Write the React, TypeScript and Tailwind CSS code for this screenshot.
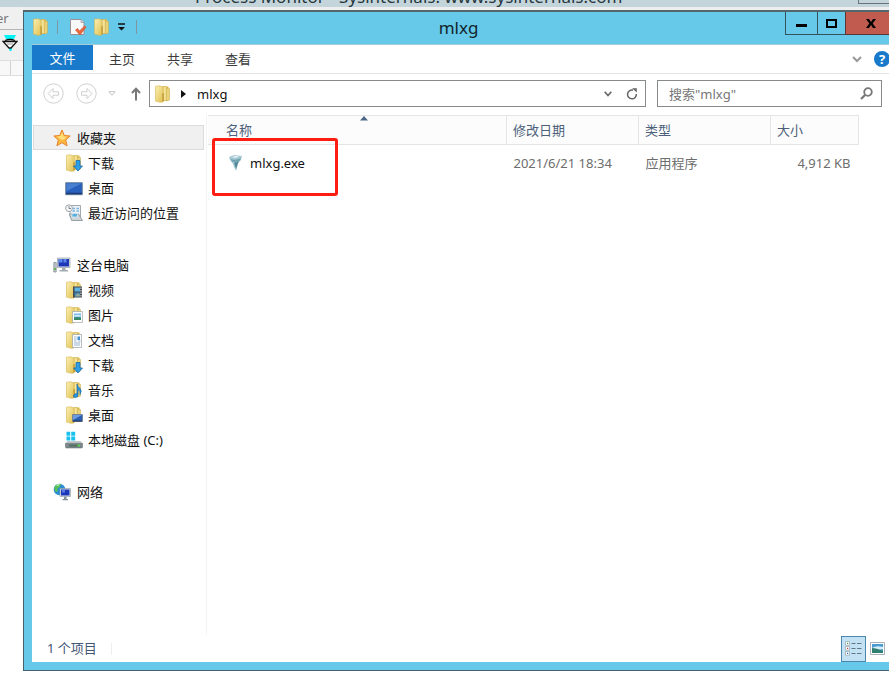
import React from "react";

type IconProps = { className?: string };

const Folder = ({ children, className = "size-[18px]" }: IconProps & { children?: React.ReactNode }) => (
  <svg viewBox="0 0 18 18" className={`shrink-0 ${className}`} aria-hidden="true">
    <defs>
      <linearGradient id="folderFront" x1="0" y1="0" x2="1" y2="1">
        <stop offset="0" stopColor="#fbf0b4" />
        <stop offset="1" stopColor="#e0c04e" />
      </linearGradient>
    </defs>
    <path d="M7 1.500h7.500v14H7z" fill="#dcba4c" />
    <path d="M12 3l3.500.5V15l-3.500 1z" fill="#e9d27a" stroke="#c9a941" strokeWidth=".5" />
    <path d="M9 1.500h3.300v14H9z" fill="#f3e297" stroke="#caa843" strokeWidth=".5" />
    <path d="M1.500 1.200L6 .8l3 1.700v14.500l-3 .3-4.500-1.200z" fill="url(#folderFront)" stroke="#d6b753" strokeWidth=".6" />
    <path d="M8.500 8l1.200.5v7.500l-1.200 1z" fill="#b98e2e" />
    {children}
  </svg>
);

const DownloadFolder = () => (
  <Folder>
    <path d="M11 6.500h4V12h2.500L13 17 8.500 12H11z" fill="#2f9fe3" stroke="#1769ac" strokeWidth=".8" />
  </Folder>
);

const VideoFolder = () => (
  <Folder>
    <path d="M8 5.500h9v11H8z" fill="#414b50" />
    <path d="M9.500 6.500h5.500v4H9.500z" fill="#5db0df" />
    <path d="M9.500 11.500h5.500v4H9.500z" fill="#3f83b5" />
    <path d="M10 15l3-3 2 2v1.500h-5z" fill="#93aa9a" />
    <path d="M16 6.500v9.500" stroke="#e9eff2" strokeDasharray="1.500 1" />
  </Folder>
);

const PictureFolder = () => (
  <Folder>
    <path d="M7.500 5.500h10v11h-10z" fill="#fff" stroke="#9ca5aa" strokeWidth=".7" />
    <path d="M9 7.500h7v6.500H9z" fill="#6fb9ea" />
    <path d="M9 11.500q3-1 7 0V14H9z" fill="#37896b" />
    <path d="M9 9.500q3-1.500 7 0v1H9z" fill="#d9eefb" />
  </Folder>
);

const DocFolder = () => (
  <Folder>
    <path d="M7.500 3.500h9v13h-9z" fill="#fbfcfd" stroke="#98a2aa" strokeWidth=".7" />
    <path d="M9 6h2.500M9 8h2.500M9 10h2.500M9 12h6M9 14h6M13 10h2.500" stroke="#8facc6" strokeWidth=".9" />
    <path d="M12.500 5.500h2.500v3.500h-2.500z" fill="#3c8fd2" />
  </Folder>
);

const MusicFolder = () => (
  <Folder>
    <path d="M12 3q.5 2.500 3 4.500t0 6q1-3-2-5v5.500q0 2.500-2.500 2.500T8.500 14.500t3.500-2z" fill="#2a93db" stroke="#1667a8" strokeWidth=".6" />
  </Folder>
);

const DesktopFolder = () => (
  <Folder>
    <path d="M7.500 8.500h10v7h-10z" fill="#2a5eb4" stroke="#6d7b8c" strokeWidth=".7" />
    <path d="M8 9h9l-9 5z" fill="#6b9ce0" />
    <path d="M8 15h9" stroke="#23334f" />
  </Folder>
);

const Star = () => (
  <svg viewBox="0 0 18 18" className="size-[18px] shrink-0" aria-hidden="true">
    <path d="M9 1l2.300 5.500 5.900.5-4.500 3.900 1.400 5.900L9 13.700 3.900 16.800l1.400-5.900L.8 7l5.900-.5z" fill="#fcb940" stroke="#e8832c" strokeWidth="1" strokeLinejoin="round" />
    <path d="M9 3.500l1.500 4 3.500.3-3 2.500L9 11 6 9l-2.500-1.200L7.500 7z" fill="#ffe07c" />
  </svg>
);

const Desktop = () => (
  <svg viewBox="0 0 18 18" className="size-[18px] shrink-0" aria-hidden="true">
    <path d="M.7 3.700h16.600v12H.7z" fill="#2860bd" stroke="#71859f" />
    <path d="M1.500 4.500h15L1.500 12z" fill="#4a80d2" />
    <path d="M1 14.500h16" stroke="#1c3a74" strokeWidth="1.500" />
  </svg>
);

const Recent = () => (
  <svg viewBox="0 0 18 18" className="size-[18px] shrink-0" aria-hidden="true">
    <path d="M5 1.500h10.500v11H5z" fill="#e9f1f6" stroke="#8d979e" strokeWidth=".8" />
    <path d="M7.500 4.500H10M11.500 4.500h2.500M7.500 7H10M11.500 7h2.500" stroke="#7cb3dc" strokeWidth="1.300" />
    <path d="M4.500 10h9l4 6.500h-11z" fill="#cdd5d9" stroke="#848d92" strokeWidth=".8" />
    <path d="M7 9.500h5.500v3.500H7z" fill="#57aee0" stroke="#dfe9ee" strokeWidth=".8" />
    <circle cx="4" cy="4.200" r="3.400" fill="#f5f7f8" stroke="#949da3" strokeWidth=".9" />
    <path d="M4 2v2.500h2" fill="none" stroke="#5e686e" strokeWidth=".8" />
  </svg>
);

const Computer = () => (
  <svg viewBox="0 0 18 18" className="size-[18px] shrink-0" aria-hidden="true">
    <path d="M.8 6.500h2.400v9.500H.8z" fill="#c4cbd0" stroke="#788288" strokeWidth=".7" />
    <path d="M1.200 12h1.600v2H1.200z" fill="#54b33c" />
    <path d="M4.500 2h12.500v9.500H4.500z" fill="#e1e5e8" stroke="#929ba2" strokeWidth=".7" />
    <path d="M5.500 3h10.500v7.500H5.500z" fill="#1c36b5" />
    <path d="M5.500 3h4v3.500h-4zM10.500 3h3v3.500h-3z" fill="#5c86e8" />
    <path d="M9 12h3.500v2H15v1.500H6.500V14H9z" fill="#a4abb0" />
  </svg>
);

const Drive = () => (
  <svg viewBox="0 0 18 18" className="size-[18px] shrink-0" aria-hidden="true">
    <path d="M1.500.8h3.700v4H1.500zM6.200.8h4v4h-4zM1.500 5.600h3.700v4H1.500zM6.200 5.600h4v4h-4z" fill="#19c1ee" />
    <path d="M2.500 10h13l2 2.500H.5z" fill="#c3cacd" />
    <path d="M.5 12.300h17v3.700q0 1-1 1h-15q-1 0-1-1z" fill="#7c878b" stroke="#5c6669" strokeWidth=".5" />
    <path d="M4 13.700h10v1.800H4z" fill="#4f6f5b" />
    <path d="M12.500 13.700h2.500v1.800h-2.500z" fill="#56d64a" />
  </svg>
);

const Network = () => (
  <svg viewBox="0 0 18 18" className="size-[18px] shrink-0" aria-hidden="true">
    <circle cx="6.500" cy="6.500" r="5.800" fill="#2a8dd5" />
    <path d="M2 3q3-3 6-2L7 4 4.500 5.500 5 8l-2 1Q.5 7 2 3zM7 7l4-1v5l-3 1z" fill="#58bf55" />
    <path d="M3 2q2-1 4-.7L5 3z" fill="#d5f2e0" />
    <path d="M7 5.500h10.500v8H7z" fill="#dfe4e9" stroke="#8a949e" strokeWidth=".6" />
    <path d="M8 6.500h8.500v6H8z" fill="#1b36b9" />
    <path d="M9 6.500h3v3H9z" fill="#587ee2" />
    <path d="M11 13.800h2.500V16H15v1.200H9.500V16H11z" fill="#848e96" />
  </svg>
);

const CheckedPage = () => (
  <svg viewBox="0 0 18 18" className="size-[18px] shrink-0" aria-hidden="true">
    <path d="M1.500 1.500H12l3 3v12H1.500z" fill="#f7f8fa" stroke="#9c8f95" />
    <path d="M12 1.500v3h3" fill="#d9dde1" stroke="#9c8f95" strokeWidth=".7" />
    <path d="M6.500 12l2-1.500 2 2.500L15.500 8l1.500 1-6 8z" fill="#e9683d" stroke="#d4532c" strokeWidth=".7" />
  </svg>
);

const ExeIcon = () => (
  <svg viewBox="0 0 16 18" className="h-[18px] w-4 shrink-0" aria-hidden="true">
    <path d="M1 3l5-2 8 1-1 4-3 3-.5 3L8 17l-2-4-1-3-3-4z" fill="#a7c9d3" />
    <path d="M2.500 5q5 2 10.500-1l-1 2.500q-4 2.500-8 1z" fill="#6ea3b2" />
    <path d="M6 8.500q3 0 5-1.500L9.500 10.500l-1 3L8 15z" fill="#4f8798" />
    <path d="M4 3q4-1.500 7-.5Q8 4.500 4 3z" fill="#edf7fa" />
  </svg>
);

const sidebar: { head: string; icon: React.ReactNode; active?: boolean; items: [string, React.ReactNode][] }[] = [
  {
    head: "收藏夹",
    icon: <Star />,
    active: true,
    items: [
      ["下载", <DownloadFolder />],
      ["桌面", <Desktop />],
      ["最近访问的位置", <Recent />],
    ],
  },
  {
    head: "这台电脑",
    icon: <Computer />,
    items: [
      ["视频", <VideoFolder />],
      ["图片", <PictureFolder />],
      ["文档", <DocFolder />],
      ["下载", <DownloadFolder />],
      ["音乐", <MusicFolder />],
      ["桌面", <DesktopFolder />],
      ["本地磁盘 (C:)", <Drive />],
    ],
  },
  { head: "网络", icon: <Network />, items: [] },
];

function TitleBar() {
  return (
    <header className="flex h-8 shrink-0 items-start bg-[#66c9e9]">
      <div className="flex h-[30px] flex-1 items-center pl-2">
        <Folder />
        <span className="ml-[7px] h-3.5 w-px bg-[#7d98a2]" />
        <button aria-label="属性" className="ml-[11px]"><CheckedPage /></button>
        <button aria-label="新建文件夹" className="ml-1.5"><Folder /></button>
        <button aria-label="自定义快速访问工具栏" className="ml-1.5">
          <svg viewBox="0 0 9 8" className="h-2 w-[9px]"><path d="M1 1h7" stroke="#111" strokeWidth="1.500" /><path d="M1 4h7L4.500 7.500z" fill="#111" /></svg>
        </button>
        <span className="ml-2.5 h-3.5 w-px bg-[#7d98a2]" />
      </div>
      <h1 className="h-8 pr-1 text-[17px] leading-8 text-[#12242b]">mlxg</h1>
      <div className="flex flex-1 justify-end">
        <button aria-label="最小化" className="flex h-[23px] w-8 items-center justify-center border-b border-l border-[#35525d]">
          <span className="mt-1 h-[3px] w-[11px] bg-black" />
        </button>
        <button aria-label="最大化" className="flex h-[23px] w-7 items-center justify-center border-b border-l border-[#35525d]">
          <span className="h-[9px] w-[11px] border-2 border-black" />
        </button>
        <button aria-label="关闭" className="flex h-[23px] w-11 items-center justify-center border-b border-l border-[#5f3532] bg-[#c15a4f] pl-1.5">
          <svg viewBox="0 0 10 9" className="h-[9px] w-2.5"><path d="M0 0h3l2 3 2-3h3L6.700 4.500 10 9H7L5 6 3 9H0l3.300-4.500z" fill="#000" /></svg>
        </button>
      </div>
    </header>
  );
}

function Ribbon() {
  return (
    <nav className="flex h-[30px] shrink-0 items-start border-b border-[#e2e3e4] border-t border-t-[#a9cbd8]">
      <button className="h-[25px] w-[61px] bg-[#1979ca] text-white">文件</button>
      {["主页", "共享", "查看"].map((t) => (
        <button key={t} className="h-7 px-4 text-[#3c3c3c]">{t}</button>
      ))}
      <div className="ml-auto flex h-7 items-center">
        <button aria-label="展开功能区" className="mr-3">
          <svg viewBox="0 0 10 7" className="h-[7px] w-2.5"><path d="M1 1l4 4 4-4" fill="none" stroke="#999" strokeWidth="2" /></svg>
        </button>
        <button aria-label="帮助" className="-mr-px flex size-4 items-center justify-center rounded-full bg-[#1979ca] text-[13px] font-bold text-white">?</button>
      </div>
    </nav>
  );
}

function AddressRow() {
  return (
    <div className="flex h-[39px] shrink-0 items-center pr-[7px] pl-[11px]">
      <button aria-label="后退" className="mr-3">
        <svg viewBox="0 0 21 21" className="size-[21px]" fill="none" stroke="#cfcfcf"><circle cx="10.500" cy="10.500" r="9.700" /><path d="M5 10.500l5-5v3.300h5.500v3.400H10v3.300z" /></svg>
      </button>
      <button aria-label="前进" className="mr-[11px]">
        <svg viewBox="0 0 21 21" className="size-[21px]" fill="none" stroke="#cfcfcf"><circle cx="10.500" cy="10.500" r="9.700" /><path d="M16 10.500l-5-5v3.300H5.500v3.400H11v3.300z" /></svg>
      </button>
      <button aria-label="最近浏览的位置" className="mr-[15px]">
        <svg viewBox="0 0 8 5" className="h-[5px] w-2"><path d="M1 .7h6L4 4.300z" fill="none" stroke="#c4c4c4" /></svg>
      </button>
      <button aria-label="向上" className="mr-2">
        <svg viewBox="0 0 10 14" className="h-3.5 w-2.5" fill="none" stroke="#777" strokeWidth="2"><path d="M5 13.500V2M1 6l4-4.300L9 6" /></svg>
      </button>
      <div className="flex h-[27px] flex-1 items-center border border-[#868a8a] pl-1 text-[#111]">
        <Folder />
        <svg viewBox="0 0 5 8" className="mr-[11px] ml-[9px] h-2 w-[5px]"><path d="M0 0l5 4-5 4z" fill="#111" /></svg>
        <span>mlxg</span>
        <button aria-label="以前的位置" className="mr-3.5 ml-auto">
          <svg viewBox="0 0 8 6" className="h-1.5 w-2"><path d="M.7.7L4 4.500 7.300.7" fill="none" stroke="#666" strokeWidth="1.600" /></svg>
        </button>
        <button aria-label="刷新" className="mr-[7px]">
          <svg viewBox="0 0 12 12" className="size-3" fill="none" stroke="#666" strokeWidth="1.500"><path d="M7 2.200A4.400 4.400 0 1 0 10.300 6" /><path d="M6 .2h4.800v4.300z" fill="#666" stroke="none" /></svg>
        </button>
      </div>
      <div className="ml-[11px] flex h-[27px] w-[225px] items-center border border-[#868a8a] pr-2 pl-[11px]">
        <input aria-label='搜索"mlxg"' placeholder='搜索"mlxg"' className="min-w-0 flex-1 bg-transparent text-[#222] outline-none placeholder:text-[#777]" />
        <svg viewBox="0 0 13 13" className="size-[13px]" fill="none" stroke="#777" strokeWidth="1.800"><circle cx="8" cy="5" r="3.800" /><path d="M5.300 7.700L1 12" strokeWidth="2.200" /></svg>
      </div>
    </div>
  );
}

function Sidebar() {
  return (
    <aside className="flex w-[175px] shrink-0 flex-col gap-[27px] border-r border-[#f3f3f3] pt-3 pr-[2px] pl-px text-[#111]">
      {sidebar.map((g) => (
        <section key={g.head}>
          <a href="#" className={g.active ? "flex h-[25px] items-center gap-1.5 border border-[#dcdcdc] bg-[#f0f0f0] pl-[19px]" : "flex h-[25px] items-center gap-1.5 pl-5"}>
            {g.icon}
            <span>{g.head}</span>
          </a>
          {g.items.map(([t, icon]) => (
            <a key={t} href="#" className="flex h-[25px] items-center gap-[5px] pl-8">
              {icon}
              <span>{t}</span>
            </a>
          ))}
        </section>
      ))}
    </aside>
  );
}

function FileList() {
  const th = "h-[29px] border border-[#e3e5e7] bg-[#fcfcfc] p-0 pl-1.5 text-left font-normal text-[#4c607a]";
  return (
    <main className="relative min-w-0 flex-1 pt-[2px] pr-[30px] pl-px">
      <table className="w-full table-fixed border-collapse">
        <colgroup>
          <col />
          <col className="w-[132px]" />
          <col className="w-[132px]" />
          <col className="w-[88px]" />
        </colgroup>
        <thead>
          <tr>
            <th className="relative h-[29px] border border-l-0 border-[#e3e5e7] bg-[#fcfcfc] p-0 pl-[18px] text-left font-normal text-[#4c607a]">
              名称
              <svg viewBox="0 0 8 5" className="absolute top-0 left-[51%] h-[5px] w-2"><path d="M4 0l4 4.500H0z" fill="#4c6686" /></svg>
            </th>
            <th className={th}>修改日期</th>
            <th className={th}>类型</th>
            <th className={th}>大小</th>
          </tr>
        </thead>
        <tbody>
          <tr className="h-9 text-[#6d6d6d]">
            <td className="p-0 pl-5 text-[#111]">
              <div className="flex items-center gap-1.5">
                <ExeIcon />
                mlxg.exe
              </div>
            </td>
            <td className="p-0 pl-[7px]">2021/6/21 18:34</td>
            <td className="p-0 pl-[7px]">应用程序</td>
            <td className="p-0 pr-2 text-right">4,912 KB</td>
          </tr>
        </tbody>
      </table>
      <div className="pointer-events-none absolute top-[25px] left-[5px] h-[58px] w-[126px] rounded-[3px] border-[3px] border-[#ff1d12]" />
    </main>
  );
}

function StatusBar() {
  return (
    <footer className="flex h-[27px] shrink-0 items-center pl-[15px] text-[#3f5573]">
      <span className="pb-px">1 个项目</span>
      <span className="ml-3.5 h-3 w-px bg-[#eeeeee]" />
      <div className="ml-auto flex items-center">
        <button aria-label="详细信息" className="flex h-[26px] w-[25px] items-center justify-center border border-[#4b86ae] bg-[#c2e1f3]">
          <svg viewBox="0 0 17 15" className="h-[15px] w-[17px]">
            <path d="M.5.5h4v3.700h-4zM.5 5.500h4v3.700h-4zM.5 10.500h4v3.700h-4z" fill="#fff" stroke="#9aa6ae" strokeWidth=".7" />
            <path d="M2 2.300h1.200" stroke="#4f9a45" strokeWidth="1.300" />
            <path d="M2 7.300h1.200" stroke="#d33" strokeWidth="1.300" />
            <path d="M2 12.300h1.200" stroke="#36c" strokeWidth="1.300" />
            <path d="M6.500 2.500h4M12 2.500h4.500M6.500 7.500h4M12 7.500h4.500M6.500 12.500h4M12 12.500h4.500" stroke="#5f7888" strokeWidth="1.200" />
          </svg>
        </button>
        <button aria-label="大缩略图" className="mx-1">
          <svg viewBox="0 0 15 13" className="h-[13px] w-[15px]">
            <path d="M.5.5h14v12H.5z" fill="#fff" stroke="#a7b0b8" />
            <path d="M2 2h11v9H2z" fill="#4a9ad4" />
            <path d="M2 6q4-3 11-1v2L2 9z" fill="#d8eef6" />
            <path d="M2 6q4 0 11 3v2H2z" fill="#2f7f70" />
          </svg>
        </button>
      </div>
    </footer>
  );
}

export default function App() {
  return (
    <div className="flex h-screen w-full flex-col overflow-hidden bg-white text-[13px] leading-5 [font-family:'Noto_Sans','Noto_Sans_CJK_SC',sans-serif]">
      <div className="flex h-[7px] shrink-0 items-end overflow-hidden bg-[#c3d5da] pl-[195px]">
        <span className="text-[17px] leading-5 whitespace-nowrap text-[#26363c]">Process Monitor - Sysinternals: www.sysinternals.com</span>
        <span className="mb-[3px] ml-auto h-5 w-[31px] shrink-0 border border-r-0 border-[#65757b]" />
      </div>
      <div className="flex min-h-0 flex-1">
        <div className="w-[23px] shrink-0 overflow-hidden text-[#777]">
          <div className="h-[23px] border-b border-[#b5b5b5] bg-[#f0f0f0] leading-[22px]">
            <span className="-ml-1">er</span>
          </div>
          <div className="flex h-[30px] items-start bg-[#f0f0f0] pt-[5px] pl-0.5">
            <svg viewBox="0 0 16 16" className="size-4">
              <path d="M2 0h12l-2 4H4zM7 13h3l-.5 3h-2z" fill="#00f4f7" />
              <path d="M1 6.500h14L9 13H7z" fill="#fff" stroke="#111" strokeWidth="1.300" />
              <path d="M3 5.500q5-2 10 0" fill="none" stroke="#111" strokeWidth="1.300" />
              <path d="M5 9h6" stroke="#999" />
            </svg>
          </div>
          <div className="flex h-4 border-y border-[#dedede] bg-[#f8f8f8]">
            <span className="ml-2.5 w-px bg-[#d0d0d0]" />
          </div>
        </div>
        <div className="flex min-w-0 flex-1 flex-col bg-[#eeeeee] pt-[3px]">
          <div className="flex min-h-0 flex-1 flex-col border border-t-2 border-r-0 border-[#47616b] border-t-[#53666e] bg-[#66c9e9]">
            <TitleBar />
            <div className="mb-2 ml-2 flex min-h-0 flex-1 flex-col bg-white">
              <Ribbon />
              <AddressRow />
              <div className="flex min-h-0 flex-1">
                <Sidebar />
                <FileList />
              </div>
              <StatusBar />
            </div>
          </div>
          <div className="h-2 shrink-0 bg-white" />
        </div>
      </div>
    </div>
  );
}
